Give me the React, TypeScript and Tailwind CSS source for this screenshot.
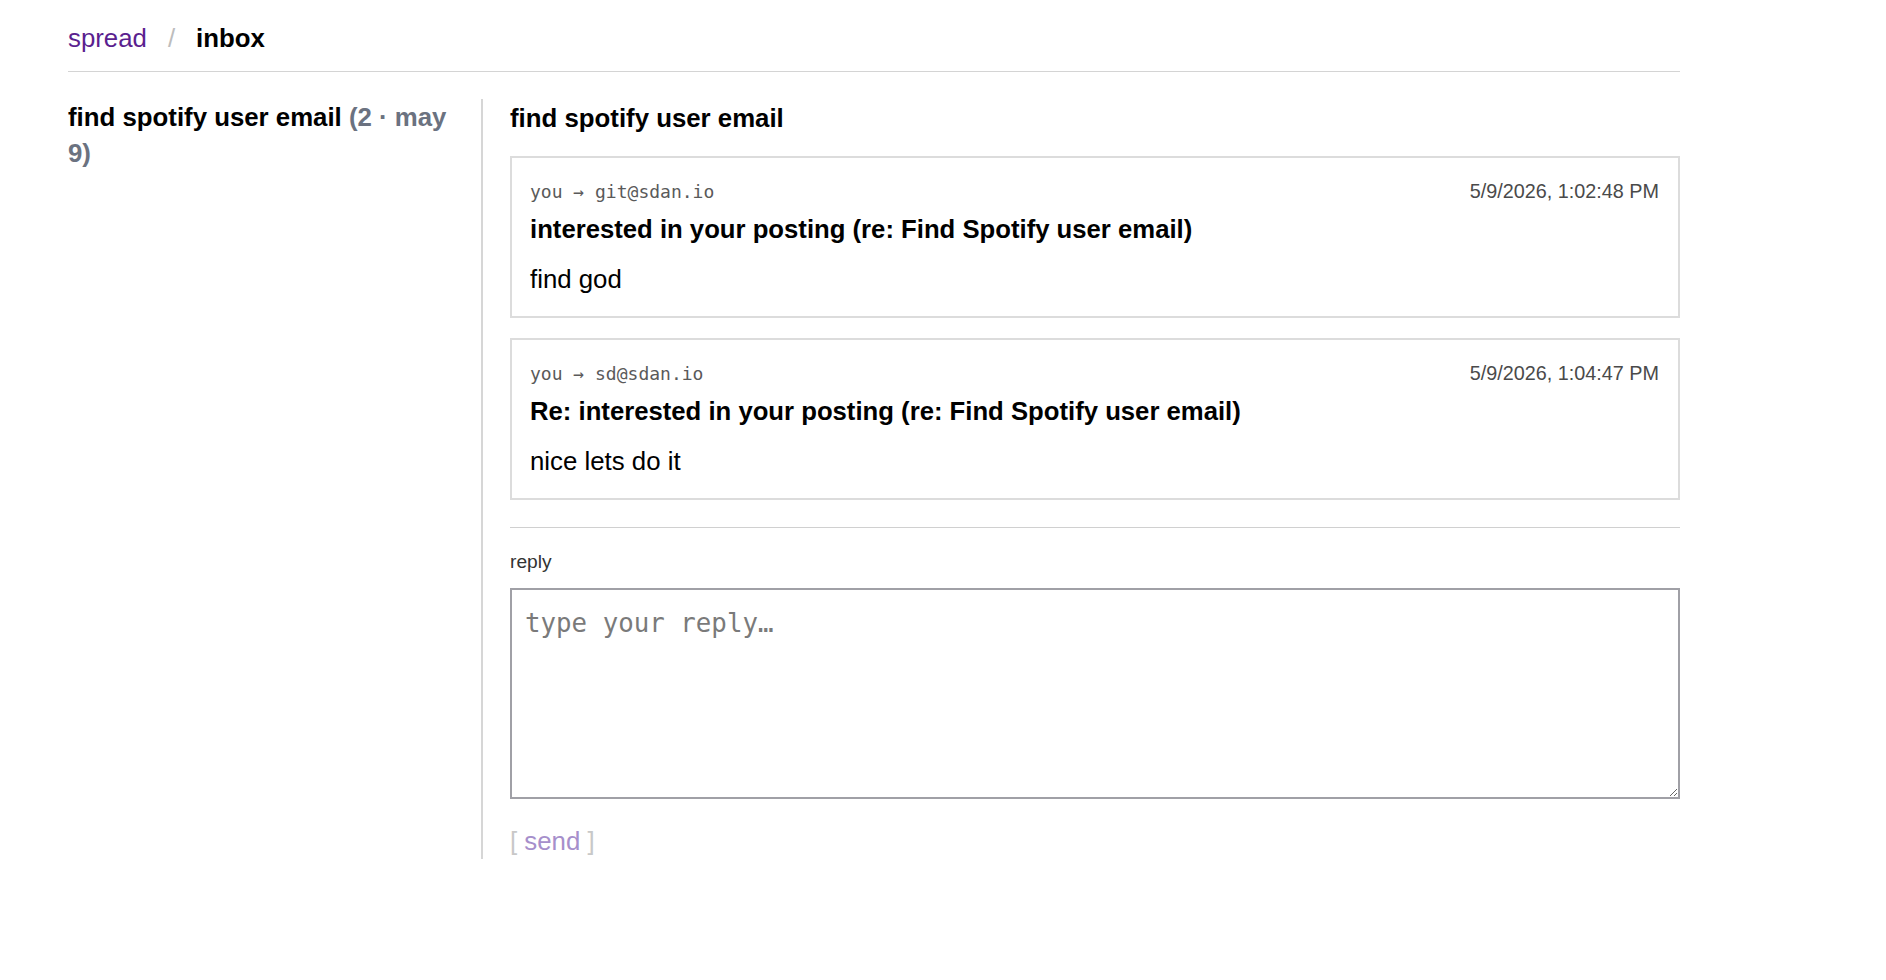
import React from "react";

const sans = { fontFamily: '"Liberation Sans", Arial, Helvetica, sans-serif' };

function Message({ to, date, subject, body }: { to: string; date: string; subject: string; body: string }) {
  return (
    <div className="border-2 border-[#dcdcdc] pl-[18px] pr-[19px] pt-5 pb-[19px]">
      <div className="flex items-baseline justify-between leading-[27px]">
        <span className="font-['DejaVu_Sans_Mono',monospace] text-[18px] text-[#5a5a5a]">you → {to}</span>
        <span className="text-[19.8px] text-[#4a4a4a]">{date}</span>
      </div>
      <div className="mt-[6px] text-[25.7px] font-bold leading-[36px] text-black">{subject}</div>
      <div className="mt-[14px] text-[25.8px] leading-[36px] text-black">{body}</div>
    </div>
  );
}

export default function App() {
  return (
    <div className="min-h-screen bg-white text-black" style={sans}>
      <div className="ml-[68px] w-[1612px]">
        <div className="flex items-baseline gap-[21px] border-b-[1.5px] border-[#d4d4d4] pt-5 pb-[15px] text-[25.8px] leading-[36px]">
          <span className="text-[#5b1f8f]">spread</span>
          <span className="text-[#bdbdbd]">/</span>
          <span className="font-bold">inbox</span>
        </div>
        <div className="mt-[27px] flex">
          <div className="w-[413px] shrink-0 pr-[26px]">
            <div className="text-[25.8px] font-bold leading-[36px]">
              find spotify user email <span className="text-[#6b7280]">(2 · may 9)</span>
            </div>
          </div>
          <div className="flex-1 border-l-2 border-[#d6d6d6] pl-[27px]">
            <h2 className="mt-[1px] text-[25.8px] font-bold leading-[36px]">find spotify user email</h2>
            <div className="mt-[20px] flex flex-col gap-[20px]">
              <Message
                to="git@sdan.io"
                date="5/9/2026, 1:02:48 PM"
                subject="interested in your posting (re: Find Spotify user email)"
                body="find god"
              />
              <Message
                to="sd@sdan.io"
                date="5/9/2026, 1:04:47 PM"
                subject="Re: interested in your posting (re: Find Spotify user email)"
                body="nice lets do it"
              />
            </div>
            <div className="mt-[27px] border-t-[1.5px] border-[#d0d0d0]" />
            <div className="mt-[19px] text-[19.2px] leading-[29px] text-[#333]">reply</div>
            <textarea
              className="mt-[12px] block h-[211px] w-full resize-y border-2 border-[#a0a0a6] px-[13px] pt-[15px] pb-[10px] font-['DejaVu_Sans_Mono',monospace] text-[25.8px] leading-[36px] text-black outline-none placeholder:text-[#7a7a7a]"
              placeholder="type your reply…"
            />
            <div className="mt-[24px] text-[25.8px] leading-[36px]">
              <span className="text-[#c8c8c8]">[ </span>
              <span className="text-[#a68fcb]">send</span>
              <span className="text-[#c8c8c8]"> ]</span>
            </div>
          </div>
        </div>
      </div>
    </div>
  );
}
